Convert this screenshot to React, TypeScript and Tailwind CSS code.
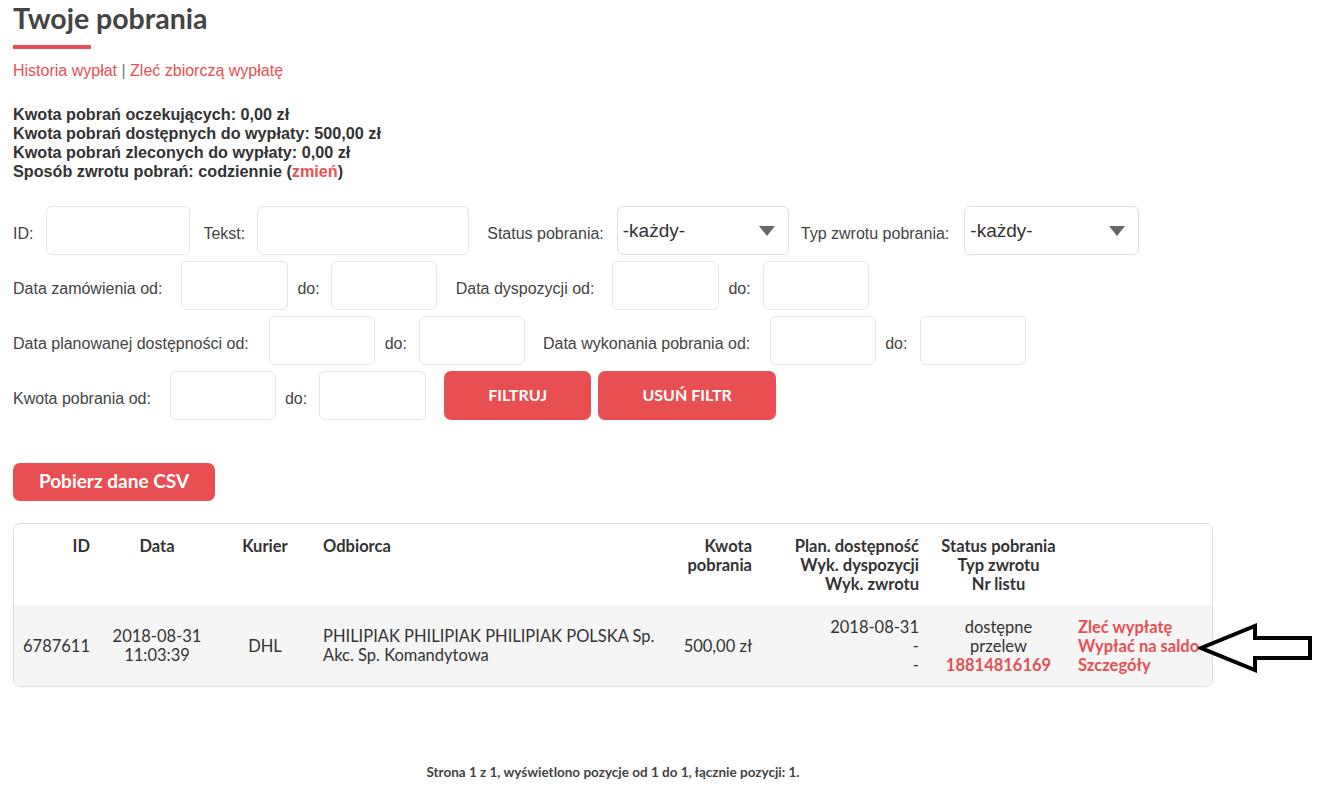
import React from 'react';

const arial = { fontFamily: '"Liberation Sans", Arial, sans-serif' };
const pt = { fontFamily: 'Lato, "Open Sans", sans-serif' };

function Input({ w }: { w: string }) {
  return <div className={`${w} h-[49px] rounded-[6px] border border-[#e6e6e6] bg-white shrink-0`} />;
}

function Select() {
  return (
    <div className="h-[49px] rounded-[6px] border border-[#e0e0e0] bg-white shrink-0 flex items-start justify-between pl-[5px] pr-[13px] pt-[14px] text-[19px] text-[#333] leading-none">
      <span>-każdy-</span>
      <svg width="16" height="10" viewBox="0 0 16 10" className="mt-[5px]">
        <path d="M0 0 L16 0 L8 10 Z" fill="#666" />
      </svg>
    </div>
  );
}

function Label({ children, className = '' }: { children: React.ReactNode; className?: string }) {
  return <span className={`text-[16px] text-[#444] whitespace-nowrap mt-[8px] ${className}`}>{children}</span>;
}

export default function App() {
  return (
    <div className="relative w-[1226px] px-[13px] pb-[12px] bg-white text-[#333]" style={arial}>
      <h1 className="text-[28.5px] font-bold text-[#444] leading-none pt-[4px]" style={pt}>
        Twoje pobrania
      </h1>
      <div className="w-[78px] h-[4px] bg-[#e84f52] mt-[12px]" />

      <div className="mt-[12px] text-[16px] text-[#e84f52] leading-[20px]">
        <a>Historia wypłat</a> <span className="text-[#777]">|</span> <a>Zleć zbiorczą wypłatę</a>
      </div>

      <div className="mt-[24px] text-[16.2px] font-bold leading-[19px] text-[#333]">
        <div>Kwota pobrań oczekujących: 0,00 zł</div>
        <div>Kwota pobrań dostępnych do wypłaty: 500,00 zł</div>
        <div>Kwota pobrań zleconych do wypłaty: 0,00 zł</div>
        <div>
          Sposób zwrotu pobrań: codziennie (<span className="text-[#e84f52]">zmień</span>)
        </div>
      </div>

      <div className="mt-[25px] flex flex-col gap-[6px]">
        <div className="flex items-center">
          <Label>ID:</Label>
          <div className="ml-[13px]"><Input w="w-[144px]" /></div>
          <Label className="ml-[13px]">Tekst:</Label>
          <div className="ml-[12px]"><Input w="w-[212px]" /></div>
          <Label className="ml-[18px]">Status pobrania:</Label>
          <div className="ml-[13px] w-[172px]"><Select /></div>
          <Label className="ml-[12px]">Typ zwrotu pobrania:</Label>
          <div className="ml-[15px] w-[175px]"><Select /></div>
        </div>
        <div className="flex items-center">
          <Label>Data zamówienia od:</Label>
          <div className="ml-[19px]"><Input w="w-[107px]" /></div>
          <Label className="ml-[9px]">do:</Label>
          <div className="ml-[11px]"><Input w="w-[106px]" /></div>
          <Label className="ml-[19px]">Data dyspozycji od:</Label>
          <div className="ml-[18px]"><Input w="w-[107px]" /></div>
          <Label className="ml-[9px]">do:</Label>
          <div className="ml-[12px]"><Input w="w-[106px]" /></div>
        </div>
        <div className="flex items-center">
          <Label>Data planowanej dostępności od:</Label>
          <div className="ml-[20px]"><Input w="w-[106px]" /></div>
          <Label className="ml-[10px]">do:</Label>
          <div className="ml-[12px]"><Input w="w-[106px]" /></div>
          <Label className="ml-[18px]">Data wykonania pobrania od:</Label>
          <div className="ml-[20px]"><Input w="w-[106px]" /></div>
          <Label className="ml-[9px]">do:</Label>
          <div className="ml-[13px]"><Input w="w-[106px]" /></div>
        </div>
        <div className="flex items-center">
          <Label>Kwota pobrania od:</Label>
          <div className="ml-[19px]"><Input w="w-[106px]" /></div>
          <Label className="ml-[9px]">do:</Label>
          <div className="ml-[12px]"><Input w="w-[107px]" /></div>
          <button
            className="ml-[18px] w-[147px] h-[49px] rounded-[7px] bg-[#e84f52] text-white font-bold text-[16px]"
            style={pt}
          >
            FILTRUJ
          </button>
          <button
            className="ml-[7px] w-[178px] h-[49px] rounded-[7px] bg-[#e84f52] text-white font-bold text-[16px]"
            style={pt}
          >
            USUŃ FILTR
          </button>
        </div>
      </div>

      <button
        className="mt-[43px] w-[202px] h-[38px] rounded-[7px] bg-[#e84f52] text-white font-bold text-[19px] block"
        style={pt}
      >
        Pobierz dane CSV
      </button>

      <div className="mt-[22px] border border-[#dedede] rounded-[7px] overflow-hidden text-[16.5px] text-[#333]" style={pt}>
        <div className="grid grid-cols-[84px_118px_98px_354px_92px_167px_143px_141px] font-bold leading-[19px] h-[81px] pt-[13px]">
          <div className="text-right pr-[8px]">ID</div>
          <div className="text-center">Data</div>
          <div className="text-center">Kurier</div>
          <div className="pl-[9px]">Odbiorca</div>
          <div className="text-right pr-[8px]">Kwota<br />pobrania</div>
          <div className="text-right pr-[8px]">Plan. dostępność<br />Wyk. dyspozycji<br />Wyk. zwrotu</div>
          <div className="text-center">Status pobrania<br />Typ zwrotu<br />Nr listu</div>
          <div />
        </div>
        <div className="grid grid-cols-[84px_118px_98px_354px_92px_167px_143px_141px] items-center bg-[#f5f5f5] h-[81px] pt-[2px] leading-[19px]">
          <div className="text-right pr-[8px]">6787611</div>
          <div className="text-center">2018-08-31<br />11:03:39</div>
          <div className="text-center">DHL</div>
          <div className="pl-[9px]">PHILIPIAK PHILIPIAK PHILIPIAK POLSKA Sp.<br />Akc. Sp. Komandytowa</div>
          <div className="text-right pr-[8px]">500,00 zł</div>
          <div className="text-right pr-[8px]">2018-08-31<br />-<br />-</div>
          <div className="text-center">dostępne<br />przelew<br /><span className="text-[#e84f52] font-bold">18814816169</span></div>
          <div className="pl-[8px] font-bold text-[#e84f52]">
            <div>Zleć wypłatę</div>
            <div>Wypłać na saldo</div>
            <div>Szczegóły</div>
          </div>
        </div>
      </div>

      <div className="mt-[75px] text-center text-[13.5px] font-bold text-[#444]" style={pt}>
        Strona 1 z 1, wyświetlono pozycje od 1 do 1, łącznie pozycji: 1.
      </div>

      <svg className="absolute left-[1198px] top-[623px]" width="116" height="50" viewBox="1198 623 116 50">
        <path
          d="M1201 648 L1255 626 L1255 638 L1310 638 L1310 658 L1255 658 L1255 670 Z"
          fill="none"
          stroke="#000"
          strokeWidth="4"
          strokeLinejoin="miter"
        />
      </svg>
    </div>
  );
}
